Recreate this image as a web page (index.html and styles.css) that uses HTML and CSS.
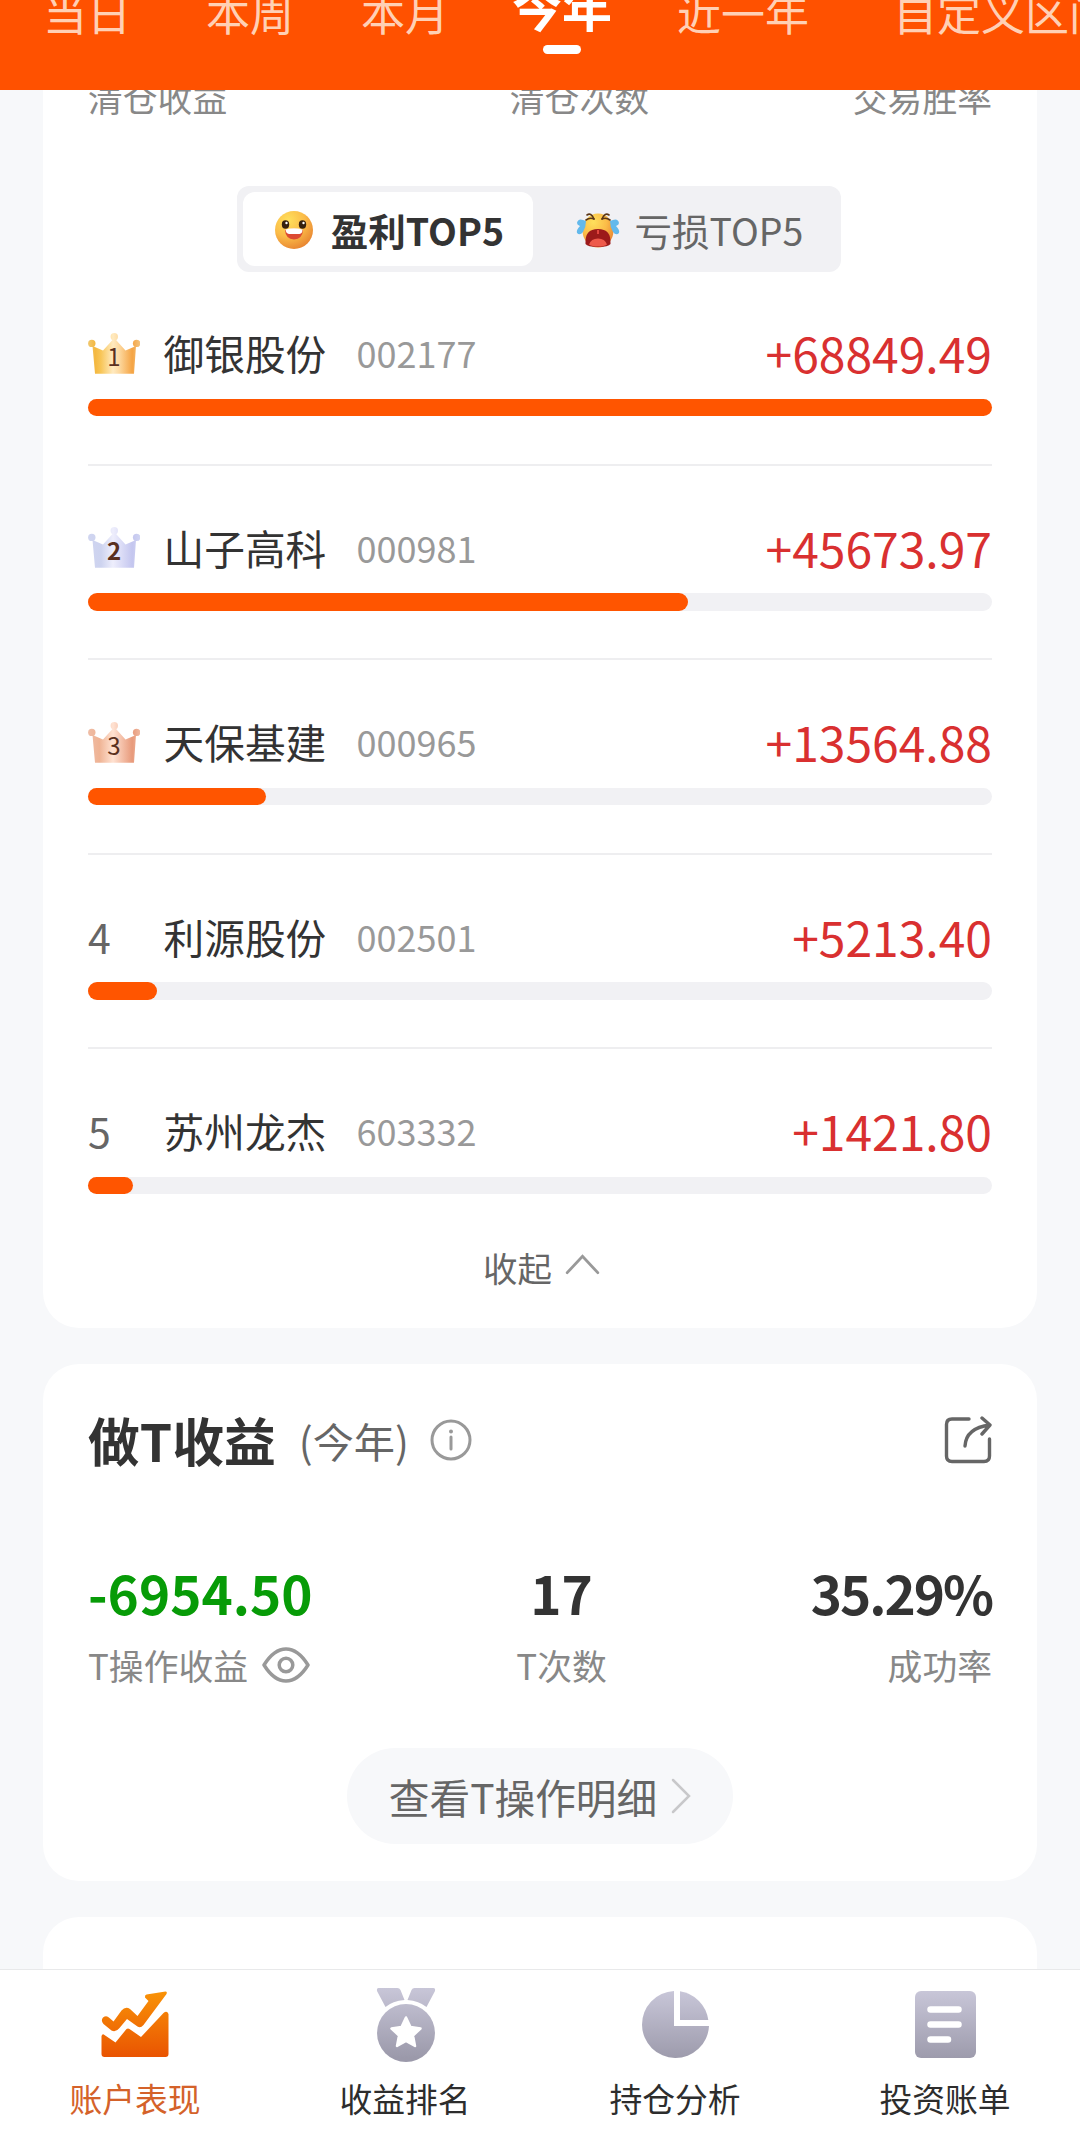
FILE: index.html
```
<!DOCTYPE html>
<html lang="zh-CN">
<head>
  <meta charset="UTF-8" />
  <meta name="viewport" content="width=device-width, initial-scale=1.0"/>
  <title>账户表现</title>
  <link rel="stylesheet" href="styles.css">
</head>
<body>
  <!-- Shared gradients and the crown shape -->
  <svg class="defs" width="0" height="0">
    <defs>
      <linearGradient id="gold" x1="0" x2="52" y1="0" y2="0" gradientUnits="userSpaceOnUse"><stop offset="0" stop-color="#f0c870"/><stop offset=".14" stop-color="#f4b840"/><stop offset=".25" stop-color="#f8c658"/><stop offset=".48" stop-color="#ffeac0"/><stop offset=".6" stop-color="#fdd9a0"/><stop offset=".85" stop-color="#f5a444"/><stop offset="1" stop-color="#f3c27c"/></linearGradient>
      <linearGradient id="silver" x1="0" x2="52" y1="0" y2="0" gradientUnits="userSpaceOnUse"><stop offset="0" stop-color="#d0d5f0"/><stop offset=".25" stop-color="#cdd3ef"/><stop offset=".48" stop-color="#eeeefc"/><stop offset=".85" stop-color="#c4c6ef"/><stop offset="1" stop-color="#d0d4f2"/></linearGradient>
      <linearGradient id="bronze" x1="0" x2="52" y1="0" y2="0" gradientUnits="userSpaceOnUse"><stop offset="0" stop-color="#efbda6"/><stop offset=".22" stop-color="#efb394"/><stop offset=".48" stop-color="#ffe2d2"/><stop offset=".85" stop-color="#e89a7b"/><stop offset="1" stop-color="#efb8a0"/></linearGradient>
      <linearGradient id="orange" x1="0" y1="0" x2="0" y2="66" gradientUnits="userSpaceOnUse"><stop offset="0" stop-color="#f99307"/><stop offset="1" stop-color="#e95402"/></linearGradient>
      <linearGradient id="gray" x1="0" y1="0" x2="0" y2="70" gradientUnits="userSpaceOnUse"><stop offset="0" stop-color="#c8c6d8"/><stop offset="1" stop-color="#9b99aa"/></linearGradient>
      <radialGradient id="face" cx=".35" cy=".25" r=".85"><stop offset="0" stop-color="#ffe05c"/><stop offset=".5" stop-color="#fbbc48"/><stop offset="1" stop-color="#e57c2e"/></radialGradient>
      <symbol id="crown" viewBox="0 0 52 41">
        <circle cx="3.800" cy="10.400" r="3.700"/><circle cx="26.300" cy="3.700" r="3.700"/><circle cx="48.600" cy="10.400" r="3.700"/>
        <path d="M4.500 13L15 17.500 24.500 7h3.600L37.500 17.500 48 13 46 40.800H7z"/>
      </symbol>
    </defs>
  </svg>

  <header class="tabs">
    <span class="tab">当日</span>
    <span class="tab">本周</span>
    <span class="tab">本月</span>
    <span class="tab active">今年</span>
    <span class="tab">近一年</span>
    <span class="tab">自定义区间</span>
  </header>

  <main class="content">
    <section class="card card-top">
      <div class="label-row">
        <span class="label first">清仓收益</span>
        <span class="label">清仓次数</span>
        <span class="label">交易胜率</span>
      </div>

      <div class="switch">
        <button class="switch-btn selected">
          <svg class="emoji" viewBox="0 0 44 44">
            <circle cx="22" cy="22" r="19" fill="url(#face)"/>
            <ellipse cx="13.500" cy="16.500" rx="3.700" ry="4.200" fill="#35200f"/>
            <ellipse cx="30.500" cy="16.500" rx="3.700" ry="4.200" fill="#35200f"/>
            <circle cx="14.500" cy="15" r="1.200" fill="#fff"/><circle cx="31.500" cy="15" r="1.200" fill="#fff"/>
            <path d="M13 22q9-2.500 18 0-.5 9-9 9.500-8.500-.5-9-9.500z" fill="#dc4a32"/>
            <path d="M13.500 21.500q8.500-2.500 17 0 0 4-3 4.500H17q-3-.5-3.500-4.500z" fill="#fff"/>
          </svg>
          盈利TOP5
        </button>
        <button class="switch-btn">
          <svg class="emoji" viewBox="0 0 44 44">
            <ellipse cx="22" cy="22.500" rx="15.500" ry="17" fill="url(#face)"/>
            <path d="M11 7q4-3 7 4M33 7q-4-3-7 4" fill="none" stroke="#5b3717" stroke-width="1.600" stroke-linecap="round"/>
            <path d="M10 12q4-3 8-1M34 12q-4-3-8-1" fill="none" stroke="#5b3717" stroke-width="1.600" stroke-linecap="round"/>
            <path d="M9.500 36q-1-15 12.500-15t12.500 15q-2 3-12.500 3t-12.500-3z" fill="#9c1a1a"/>
            <path d="M13 36.500q2-6 9-6t9 6q-3 2-9 2t-9-2z" fill="#ee5a4b"/>
            <path d="M22 22v4" stroke="#e0453f" stroke-width="2"/>
            <path d="M10 13q-8-4-9 2 0 2 3 3-4 4-3 7 3 3 6-1 3-5 3-11zM34 13q8-4 9 2 0 2-3 3 4 4 3 7-3 3-6-1-3-5-3-11z" fill="#62b9ec"/>
          </svg>
          亏损TOP5
        </button>
      </div>

      <ul class="rank-list">
        <li class="rank-item">
          <div class="rank-head">
            <span class="rank crown"><svg width="52" height="41" fill="url(#gold)"><use href="#crown"/></svg><b class="crown-num">1</b></span>
            <span class="name">御银股份</span><span class="code">002177</span><span class="amount">+68849.49</span>
          </div>
          <div class="bar"><div class="fill" style="width: 100%"></div></div>
        </li>
        <li class="rank-item">
          <div class="rank-head">
            <span class="rank crown"><svg width="52" height="41" fill="url(#silver)"><use href="#crown"/></svg><b class="crown-num bold">2</b></span>
            <span class="name">山子高科</span><span class="code">000981</span><span class="amount">+45673.97</span>
          </div>
          <div class="bar"><div class="fill" style="width: 66.34%"></div></div>
        </li>
        <li class="rank-item">
          <div class="rank-head">
            <span class="rank crown"><svg width="52" height="41" fill="url(#bronze)"><use href="#crown"/></svg><b class="crown-num">3</b></span>
            <span class="name">天保基建</span><span class="code">000965</span><span class="amount">+13564.88</span>
          </div>
          <div class="bar"><div class="fill" style="width: 19.7%"></div></div>
        </li>
        <li class="rank-item">
          <div class="rank-head">
            <span class="rank">4</span>
            <span class="name">利源股份</span><span class="code">002501</span><span class="amount">+5213.40</span>
          </div>
          <div class="bar"><div class="fill" style="width: 7.6%"></div></div>
        </li>
        <li class="rank-item">
          <div class="rank-head">
            <span class="rank">5</span>
            <span class="name">苏州龙杰</span><span class="code">603332</span><span class="amount">+1421.80</span>
          </div>
          <div class="bar"><div class="fill" style="width: 5%"></div></div>
        </li>
      </ul>

      <div class="collapse">
        收起
        <svg width="35" height="21" viewBox="0 0 36 22" fill="none" stroke="#999" stroke-width="3" stroke-linecap="round"><path d="M2 19.500L18 2.500l16 17"/></svg>
      </div>
    </section>

    <section class="card card-t">
      <div class="title-row">
        <h2 class="title">做T收益</h2>
        <span class="period">(今年)</span>
        <svg class="info" width="42" height="42" viewBox="0 0 42 42" fill="none" stroke="#999" stroke-width="3" stroke-linecap="round"><circle cx="21" cy="21" r="19"/><path d="M21 18v12"/><circle cx="21" cy="12.500" r="2" fill="#999" stroke="none"/></svg>
        <svg class="share" width="48" height="48" viewBox="0 0 48 48" fill="none" stroke="#666" stroke-width="3.400" stroke-linecap="round" stroke-linejoin="round"><path d="M25 3H8Q2.500 3 2.500 8.500V40q0 5.500 5.500 5.500h32q5.500 0 5.500-5.500V23"/><path d="M21 30Q22 12 46 9M38 2l8 7-8 9"/></svg>
      </div>

      <div class="stats">
        <div class="stat left">
          <span class="value green">-6954.50</span>
          <span class="label">T操作收益
            <svg class="eye" width="48" height="36" viewBox="0 0 48 36" fill="none" stroke="#999" stroke-width="3.500"><path d="M2 18Q12 2 24 2t22 16Q36 34 24 34T2 18z" stroke-linejoin="round"/><circle cx="24" cy="18" r="6.800"/></svg>
          </span>
        </div>
        <div class="stat center">
          <span class="value">17</span>
          <span class="label">T次数</span>
        </div>
        <div class="stat right">
          <span class="value rate">35.29%</span>
          <span class="label">成功率</span>
        </div>
      </div>

      <button class="detail-btn">
        查看T操作明细
        <svg width="20" height="36" viewBox="0 0 20 36" fill="none" stroke="#c8c8ca" stroke-width="2.500" stroke-linecap="round"><path d="M2 2l16 16L2 34"/></svg>
      </button>
    </section>

    <section class="card card-next"></section>
  </main>

  <nav class="bottom-nav">
    <a class="nav-item current">
      <svg width="76" height="76" viewBox="-4.500 -4 76 76" fill="url(#orange)">
        <path d="M1.500 26.500Q5 24 8 27l4 3.500 8-11q4-4.500 8.500-1.500L36 25 47 10l-3.500-3.500Q43 4 45 3.500L64 .6q2 .2 1 2.500L42 34q-3 3.500-6 1.500L25.500 28 18 37q-4 5-8 2.500L2 33q-3-3.500-.5-6.500z"/>
        <path d="M0 45q1-3 3-1l11 7.500L25 38q1.500-1 3 0l11.500 8L62 22q3.500-3 5 1v40q0 3-3 3H3q-3 0-3-3z"/>
      </svg>
      <span>账户表现</span>
    </a>
    <a class="nav-item">
      <svg width="76" height="76" viewBox="-9.500 -1 76 76" fill="url(#gray)">
        <path d="M2 0h19q2 0 3 2l4 10Q16 13 9 19L.5 3Q0 0 2 0zM57 0H38q-2 0-3 2l-4 10q11.500 1 19 7l8.500-16Q59 0 57 0z"/>
        <circle cx="29.500" cy="45" r="29"/>
        <path d="M29.500 29.500l4.500 9.500 10 1.500-7.500 7L38.500 58l-9-5-9 5 2-10.500-7.500-7L25 39z" fill="#fff" stroke="#fff" stroke-width="2.500" stroke-linejoin="round"/>
      </svg>
      <span>收益排名</span>
    </a>
    <a class="nav-item">
      <svg width="76" height="76" viewBox="-5 -4 76 76" fill="url(#gray)">
        <path d="M32 0v35h35A33.500 33.500 0 1 1 32 0z"/><path d="M38 .3A33.500 33.500 0 0 1 66.300 29H38z"/>
      </svg>
      <span>持仓分析</span>
    </a>
    <a class="nav-item">
      <svg width="76" height="76" viewBox="-8 -4 76 76" fill="url(#gray)">
        <rect width="61" height="67" rx="6"/>
        <path d="M15.500 18.500h28M15.500 33.500h28M15.500 48.500h17.500" stroke="#fff" stroke-width="6.500" stroke-linecap="round"/>
      </svg>
      <span>投资账单</span>
    </a>
  </nav>
</body>
</html>
```

FILE: styles.css
```
* {
  box-sizing: border-box;
}

body {
  margin: 0;
  height: 2135px;
  display: flex;
  flex-direction: column;
  overflow: hidden;
  font-family: "Noto Sans CJK SC", "Noto Sans", sans-serif;
  background: #f7f8fa;
  color: #333;
}

svg {
  display: block;
  flex-shrink: 0;
}

.defs {
  position: absolute;
}

button {
  border: none;
  font-family: inherit;
  cursor: pointer;
}

/* Header */
.tabs {
  height: 90px;
  flex-shrink: 0;
  display: flex;
  align-items: flex-start;
  gap: 65px;
  padding-left: 43px;
  background: #ff5100;
  overflow: hidden;
  white-space: nowrap;
}

.tab {
  flex-shrink: 0;
  margin-top: -18px;
  font-size: 44px;
  line-height: 60px;
  color: #ffd0b5;
}

.tab:first-child {
  margin-right: 10px;
}

.tab:nth-child(3) {
  margin: -18px -2px 0 2px;
}

.tab:last-child {
  margin-left: 19px;
}

.tab.active {
  display: flex;
  flex-direction: column;
  align-items: center;
  margin-top: -25px;
  font-size: 50px;
  font-weight: 700;
  color: #fff;
}

.tab.active::after {
  content: '';
  width: 38px;
  height: 9px;
  margin-top: 10px;
  border-radius: 5px;
  background: #fff;
}

.content {
  flex: 1;
  min-height: 0;
  display: flex;
  flex-direction: column;
  gap: 36px;
  padding: 0 43px;
  overflow: hidden;
}

.card {
  flex-shrink: 0;
  padding: 0 45px;
  border-radius: 36px;
  background: #fff;
}

.label {
  display: flex;
  align-items: center;
  font-size: 34.8px;
  line-height: 50px;
  color: #888;
}

/* Top 5 card */
.card-top {
  height: 1238px;
  border-radius: 0 0 36px 36px;
}

.label-row {
  display: flex;
  justify-content: space-between;
  margin-top: -18px;
}

.label.first {
  width: 218px;
}

.switch {
  display: flex;
  width: 604px;
  height: 86px;
  margin: 64px 0 0 149px;
  padding: 6px;
  border-radius: 12px;
  background: #f1f1f4;
}

.switch-btn {
  flex: 1;
  display: flex;
  align-items: center;
  justify-content: center;
  gap: 15px;
  padding: 1px 0 0 11px;
  border-radius: 12px;
  background: transparent;
  font-size: 37.5px;
  line-height: 60px;
  color: #666;
}

.switch-btn.selected {
  flex: 0 0 290px;
  padding: 1px 0 0;
  background: #fff;
  color: #333;
  font-weight: 700;
}

.emoji {
  width: 44px;
  height: 44px;
}

.rank-list {
  list-style: none;
  margin: -1px 0 0;
  padding: 0;
}

.rank-item {
  height: 194.6px;
  padding-top: 51px;
  border-bottom: 2px solid #eeeef0;
}

.rank-item:last-child {
  border-bottom: none;
}

.rank-head {
  display: flex;
  align-items: center;
  height: 60px;
  margin-bottom: 16.6px;
  line-height: 60px;
}

.rank {
  width: 75.5px;
  font-size: 41px;
  color: #666;
}

.crown {
  position: relative;
  padding-top: 2px;
}

/* the number sits on top of the crown */
.crown-num {
  position: absolute;
  left: 0;
  top: 10px;
  width: 52px;
  font-size: 24px;
  line-height: 30px;
  font-weight: 400;
  text-align: center;
  color: #5a3020;
}

.crown-num.bold {
  font-weight: 700;
}

.name {
  width: 193px;
  padding-top: 2px;
  font-size: 40.7px;
}

.code {
  font-size: 36px;
  color: #999;
}

.amount {
  margin-left: auto;
  font-size: 48px;
  color: #d93030;
}

.bar {
  height: 17.5px;
  border-radius: 9px;
  background: #f1f1f4;
}

.fill {
  height: 100%;
  border-radius: 9px;
  background: #ff5500;
}

.collapse {
  display: flex;
  align-items: center;
  justify-content: center;
  gap: 13px;
  padding-left: 3px;
  font-size: 34.5px;
  line-height: 46px;
  color: #666;
}

.collapse svg {
  margin-top: -5px;
}

/* T trade card */
.card-t {
  height: 517px;
}

.title-row {
  display: flex;
  align-items: center;
  height: 80px;
  margin-top: 36px;
}

.title {
  margin: 0 23px 0 0;
  font-size: 51.8px;
  line-height: 70px;
}

.period {
  font-size: 41.2px;
  color: #666;
}

.info {
  margin-left: 21px;
}

.share {
  margin-left: auto;
}

.stats {
  display: flex;
  justify-content: space-between;
  margin-top: 77px;
}

.stat {
  display: flex;
  flex-direction: column;
  gap: 13px;
}

.stat.center {
  align-items: center;
}

.stat.right {
  align-items: flex-end;
}

.value {
  font-size: 53px;
  font-weight: 700;
  line-height: 70px;
}

.value.rate {
  letter-spacing: -2px;
}

.green {
  color: #079b07;
}

.eye {
  margin-left: 14px;
}

.detail-btn {
  display: flex;
  align-items: center;
  justify-content: center;
  gap: 14px;
  width: 386px;
  height: 96px;
  margin: 58px auto 0;
  padding: 0;
  border-radius: 48px;
  background: #f7f8fa;
  font-size: 40.7px;
  color: #666;
}

.card-next {
  height: 200px;
}

/* Bottom navigation */
.bottom-nav {
  display: flex;
  flex-shrink: 0;
  height: 166px;
  border-top: 1px solid #e8e9ea;
  background: #fff;
}

.nav-item {
  flex: 1;
  display: flex;
  flex-direction: column;
  align-items: center;
  padding-top: 17px;
  font-size: 32.8px;
  line-height: 40px;
  color: #2d2d2d;
}

.nav-item span {
  margin-top: 15px;
}

.nav-item.current {
  color: #d4622a;
}
```
